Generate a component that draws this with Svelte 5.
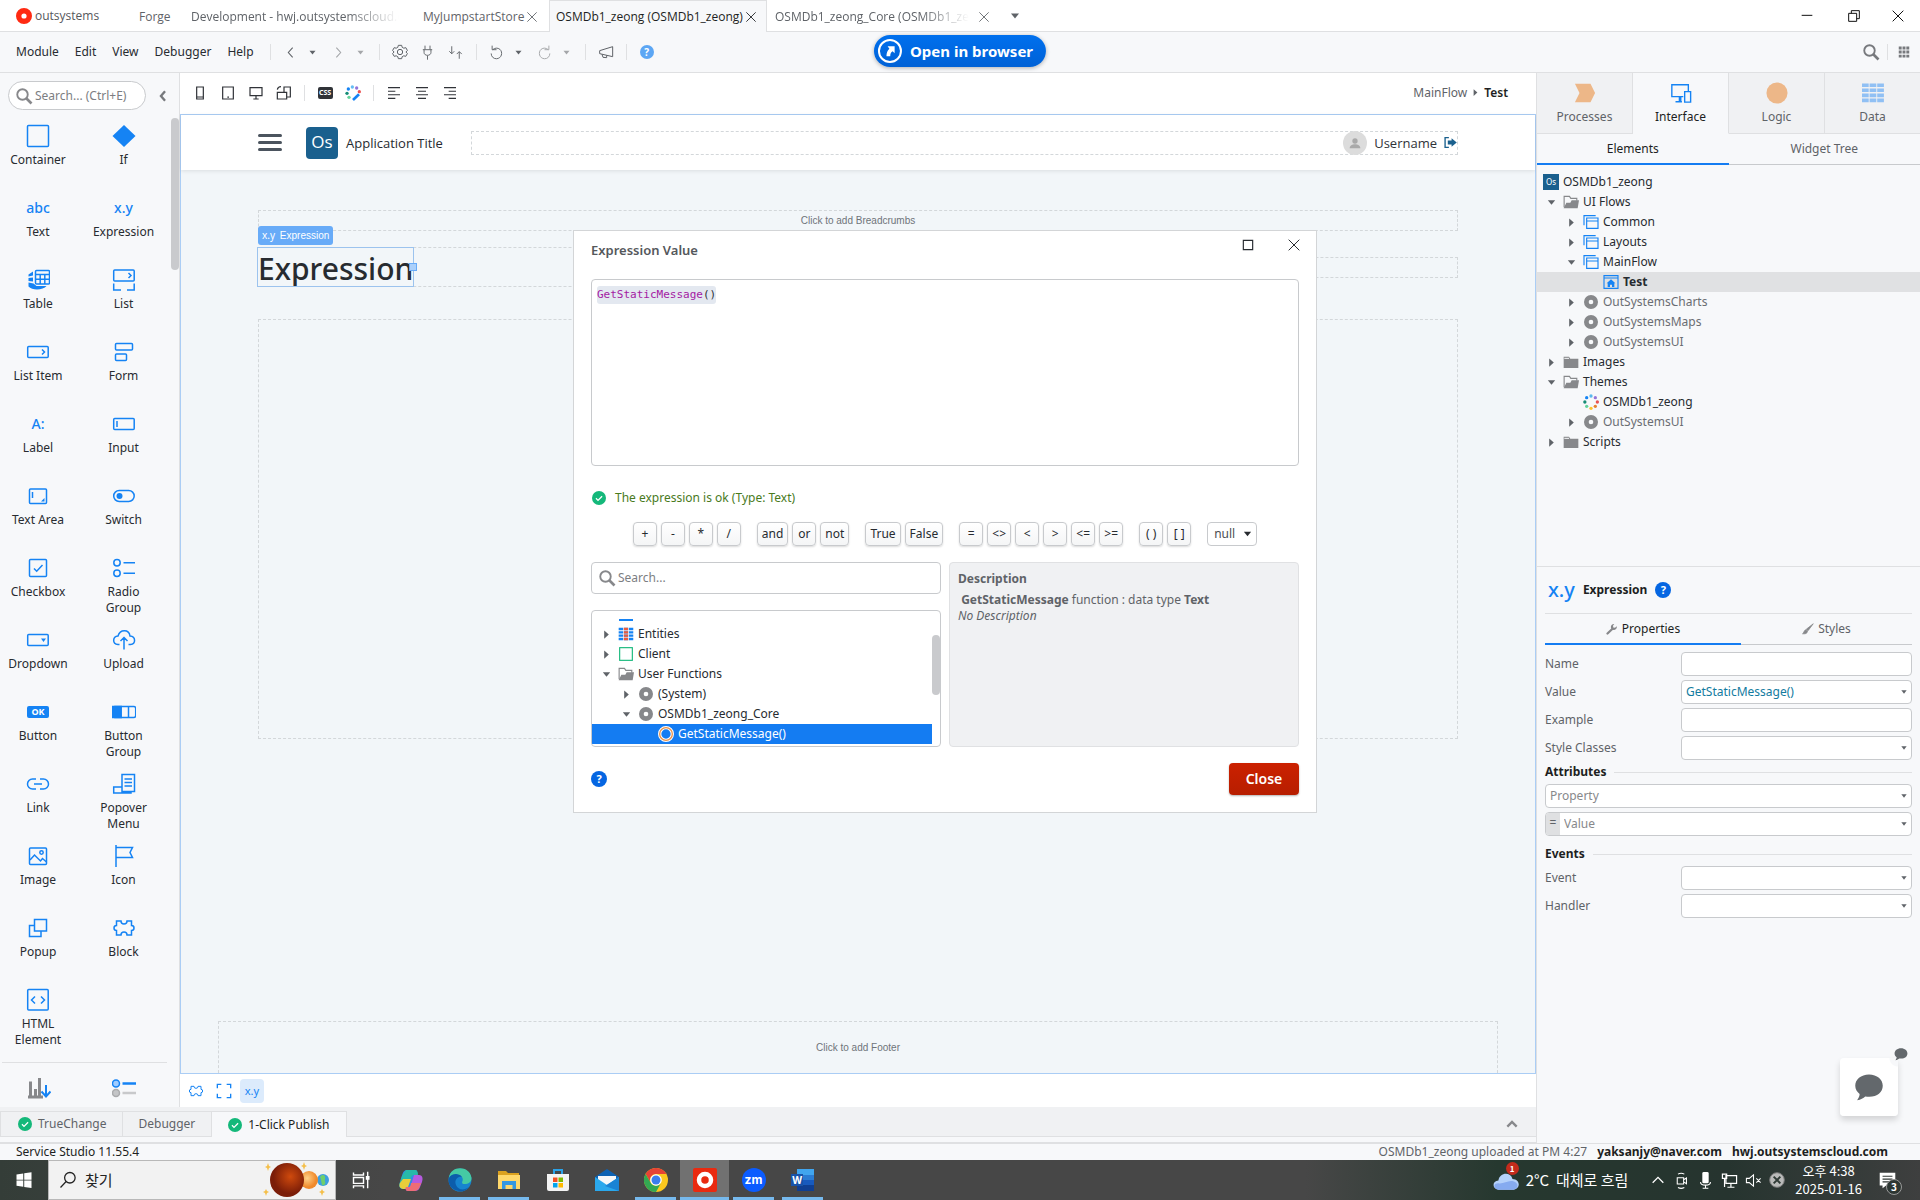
<script>
    // Inner markup of every icon, drawn on a 24x24 grid
    const icons = {
        container: '<rect x="1.5" y="1.5" width="21" height="21" rx="1"/>',
        if: '<path d="M12 1 23.5 12 12 23 .5 12z" fill="currentColor" stroke="none"/>',
        table: '<rect x="9.500" y="2.500" width="14" height="13.500" rx="1"/><path d="M9.500 6.500h14M9.500 11.200h14M14.200 6.500v9.500M18.800 6.500v9.500"/><path d="M2.500 6.500 7 3.500v4l-4.500 1zM2.500 10 7 9.500v4l-4.500-.5zM2.500 14.500l5 1 3 2.500h10c-3 4-14 5-18 .5z" fill="currentColor" stroke="none"/>',
        list: '<rect x="1.700" y="2" width="20.500" height="11" rx="1"/><path d="m16.500 5 2.500 2.500-2.500 2.500M1.700 15.500V22H9M22.200 15.500V22H15"/>',
        listitem: '<rect x="1.700" y="6.500" width="20.500" height="11" rx="1"/><path d="m16 9.500 2.500 2.500-2.500 2.500"/>',
        form: '<rect x="3.500" y="3.500" width="17" height="6.500" rx="1"/><rect x="3.500" y="14" width="11" height="6.500" rx="1"/>',
        input: '<rect x="1.700" y="6.500" width="20.500" height="11" rx="1"/><path d="M5 9v6"/>',
        textarea: '<rect x="3.500" y="5" width="17" height="14.500" rx="1"/><path d="M6.500 8v6"/><path d="M18.500 14v3.500H15z" fill="currentColor" stroke="none"/>',
        switch: '<rect x="1.700" y="6.500" width="20.500" height="11" rx="5.500"/><circle cx="7.500" cy="12" r="3" fill="currentColor" stroke="none"/>',
        checkbox: '<rect x="3.500" y="3.500" width="17" height="17" rx="1"/><path d="m8 12.500 2.700 2.700L16.500 9"/>',
        radio: '<circle cx="5" cy="6.700" r="3.200"/><circle cx="5" cy="17.300" r="3.200"/><path d="M11.500 6.700h11.500M11.500 17.300h11.500"/>',
        dropdown: '<rect x="1.700" y="6.500" width="20.500" height="11" rx="1"/><path d="M15 10.500h5l-2.500 3.500z" fill="currentColor" stroke="none"/>',
        upload: '<path d="M7.500 16.500H6c-6-.5-5.500-8 0-8.500C8 1 17 1 18 8c6 .5 6 8 .500 8.500H16.500M12 21.500v-12M8.500 13 12 9.500l3.500 3.500"/>',
        button: '<rect x="1" y="6" width="22" height="12" rx="2" fill="currentColor" stroke="none"/>',
        buttongroup: '<rect x=".7" y="6.500" width="23" height="11" rx="2"/><path d="M.7 6.500h8.500v11H.7z" fill="currentColor"/><path d="M16.500 6.500v11"/>',
        link: '<path d="M10 7H6.500a5 5 0 0 0 0 10H10M14 7h3.500a5 5 0 0 1 0 10H14M8 12h8"/>',
        popover: '<path d="M10 2.500h12.500v17H10zM12.500 7h7.500M12.500 10.500h7.500M12.500 14h7.500M10 15H1.700v6H19v-1.500"/>',
        image: '<rect x="3.500" y="4" width="17" height="16.500" rx="1"/><path d="m4 16 4.500-5 6 6 2-2.500 4 3.500"/><circle cx="15.500" cy="8.500" r="1.700"/>',
        flag: '<path d="M4 1v22M4 3.500h16.500L18 8.500l2.500 5H4"/>',
        popup: '<path d="M8.500 3.500h12v11.500h-12zM8.500 9.500h-5v11H15v-5"/>',
        block: '<path d="M4.500 5H9a2.500 2.500 0 1 0 6 0h4.500v4.500a2.500 2.500 0 1 1 0 5V19H15a2.500 2.500 0 1 0-6 0H4.500v-4.500a2.500 2.500 0 1 1 0-5z"/>',
        html: '<rect x="1.700" y="1.500" width="20.500" height="20.500" rx="1"/><path d="m9 8.500-3.500 3.500L9 15.500M15 8.500l3.500 3.500-3.500 3.500"/>',
        chart: '<path d="M1 21h15M3.500 5.500v15M8.500 13v7.500M12.500 2v18.500" stroke="#87888b" stroke-width="3"/><path d="M19 9v11M14.500 15.500 19 20.500l4.500-5" stroke-width="2"/>',
        legend: '<circle cx="4" cy="7.500" r="3.500" fill="#9fccff"/><path d="M10.500 7.500H24" stroke-width="2.500"/><circle cx="4" cy="17" r="3.500" fill="#c4c5c7" stroke="#aaabad"/><path d="M10.500 17H24" stroke="#c8c9cb" stroke-width="2.500"/>',
        search: '<circle cx="10" cy="10" r="7" stroke-width="2.500"/><path d="m15 15 7 7" stroke-width="3.500"/>',
        left: '<path d="m16 3-8 9 8 9" stroke-width="2"/>',
        right: '<path d="m8 3 8 9-8 9" stroke-width="2"/>',
        chevron: '<path d="m15.500 4-7 8 7 8" stroke-width="4"/>',
        up: '<path d="m5 16 7-7 7 7" stroke-width="3.500"/>',
        caret: '<path d="M4 7h16l-8 10z" fill="currentColor" stroke="none"/>',
        play: '<path d="M7 3v18l10-9z" fill="currentColor" stroke="none"/>',
        gear: '<circle cx="12" cy="12" r="4"/><path d="M9.500 2h5l.8 3 2.400 1.300 3-.8 2.400 4.200-2.200 2.300 2.200 2.300-2.400 4.200-3-.8-2.400 1.300-.8 3h-5l-.8-3-2.400-1.300-3 .8L.9 14.300 3.100 12 .9 9.700l2.400-4.200 3 .8L8.700 5z"/>',
        plug: '<path d="M8 1v6M16 1v6M4.500 7.500h15M6.500 7.500V12c0 6 11 6 11 0V7.500M12 17v6.500"/>',
        swap: '<path d="M6 2v12M2 10l4 4 4-4M18 22V11M14 14.500l4-4 4 4"/>',
        undo: '<path d="M5 1v6.500h7M6 7.500c3-3 8-3.500 11.500-.5 5 4.500 3 14.500-5.500 15-5 0-8.500-3.500-8.500-8.500"/>',
        redo: '<path d="M19 1v6.500h-7M18 7.500c-3-3-8-3.500-11.500-.5-5 4.500-3 14.500 5.500 15 5 0 8.500-3.500 8.500-8.500"/>',
        mega: '<path d="M22 4v15L2.500 14.500V10zM6 15.500 7.500 20l5.500.5V17"/>',
        phone: '<path d="M7 3h10v18H7zM7 18h10" stroke-width="1.800"/>',
        tablet: '<path d="M4 3h16v18H4zM11 18.200h2.500" stroke-width="1.800"/>',
        monitor: '<path d="M3 4h18v12H3zM12 16v5M8 21h8" stroke-width="1.800"/>',
        rotate: '<path d="M2 11h14v10H2zM16 18h5.500V3H12v8M2 7c.5-3 2-4.500 5.500-4.500" stroke-width="1.800"/>',
        alignleft: '<path d="M3 4h18M3 9.300h11M3 14.700h18M3 20h11" stroke-width="1.700"/>',
        aligncenter: '<path d="M3 4h18M6 9.300h12M3 14.700h18M6 20h12" stroke-width="1.700"/>',
        alignright: '<path d="M3 4h18M10 9.300h11M3 14.700h18M10 20h11" stroke-width="1.700"/>',
        wheel: '<g stroke="none"><circle cx="12" cy="3" r="2.500" fill="#58b9ee"/><circle cx="18.500" cy="5.500" r="2.500" fill="#9475d8"/><circle cx="21.500" cy="12" r="2.500" fill="#ea5252"/><circle cx="18.500" cy="18.500" r="2.500" fill="#e78131"/><circle cx="12" cy="21.500" r="2.500" fill="#fec52e"/><circle cx="5.500" cy="18.500" r="2.500" fill="#65d29b"/><circle cx="2.800" cy="12" r="2.500" fill="#168c76"/><circle cx="5.500" cy="5.500" r="2.500" fill="#1583f4"/></g>',
        brush: '<g stroke="none"><circle cx="11" cy="3" r="2.500" fill="#65bdf3"/><circle cx="17.500" cy="4.500" r="2.500" fill="#9475d8"/><circle cx="21.500" cy="10" r="2.500" fill="#ea5252"/><circle cx="5" cy="6" r="2.500" fill="#1583f4"/><circle cx="3" cy="12.500" r="2.500" fill="#168c76"/><circle cx="6" cy="18.500" r="2.500" fill="#65d29b"/></g><path d="m21 14-9 8.500" stroke="#1583f4" stroke-width="4"/>',
        full: '<path d="M2 8V2h6M16 2h6v6M22 16v6h-6M8 22H2v-6" stroke-width="2"/>',
        check: '<circle cx="12" cy="12" r="12" fill="#14b87a" stroke="none"/><path d="m6.800 12.500 3.500 3.500 7-7" stroke="#fff" stroke-width="2.200"/>',
        folder: '<path d="M1 4h8l2 3h12v14H1z" fill="#87888b" stroke="none"/><path d="M2 6.500h7" stroke="#f7f8fa" stroke-width="1.500"/>',
        open: '<path d="M1.700 20V3.500h8l2 3h9V10" stroke="#87888b" stroke-width="1.700"/><path d="M1 21.500 5 13h6l2-3.500h11L22 21.500z" fill="#87888b" stroke="none"/>',
        flow: '<path d="M1.500 17V2.500H19M5.500 6h17v15.500h-17zM5.500 10.500h17" stroke="#1583f4" stroke-width="1.700"/>',
        screen: '<path d="M1.500 2.500h21v19h-21zM1.500 6h21" stroke="#1583f4" stroke-width="1.700"/><path d="m12 8 6.500 6H17v5.500h-3.500V16h-3v3.500H7V14H5.500z" fill="#1583f4" stroke="none"/>',
        module: '<circle cx="12" cy="12" r="7" stroke="#87888b" stroke-width="7"/>',
        entity: '<path d="M1 4.500h22M1 9.500h22M1 14.500h22M1 19.500h22" stroke="#1583f4" stroke-width="3.500" stroke-dasharray="6.500 1.200"/><path d="M8.700 4.500h6.500M8.700 9.500h6.500M8.700 14.500h6.500M8.700 19.500h6.500" stroke="#ea5b3d" stroke-width="3.500"/>',
        client: '<rect x="2.500" y="2.500" width="19" height="19" stroke="#14b87a" stroke-width="1.700"/>',
        action: '<circle cx="12" cy="12" r="9.500" stroke="#fff" stroke-width="5"/><circle cx="12" cy="12" r="9.500" stroke="#e8924a" stroke-width="2"/>',
        wrench: '<path d="m3 21 9.500-9" stroke-width="4.500" stroke-linecap="round"/><path d="M21.500 6.500a6 6 0 1 1-5-4.500l-2.500 3.500.500 3.500 3.500.5z" fill="currentColor" stroke="none"/>',
        paint: '<path d="M22.500 1.500 12 15.500l-3.500-3zM7.500 13.500l3.500 3c-.5 5-5 5.500-10 5 3-1.500 2.500-6.500 6.500-8z" fill="currentColor" stroke="currentColor"/>',
        minimize: '<path d="M4 11h16"/>',
        restore: '<path d="M4 8h12v12H4zM8 8V4h12v12h-4"/>',
        maximize: '<path d="M4 4h16v16H4z" stroke-width="2"/>',
        close: '<path d="m4 4 16 16M20 4 4 20"/>',
        apps: '<path d="M3 5h18M3 12h18M3 19h18" stroke-width="5" stroke-dasharray="5 1.500"/>',
        bubble: '<path d="M12 2C5.500 2 1 6 1 11c0 3 1.500 5 3.500 6.500 0 2-1 3.500-2 5 3-.5 5-1.500 6.500-3 8 1.500 14-2.500 14-8.500C23 6 18.500 2 12 2z" fill="currentColor" stroke="none"/>',
        person: '<circle cx="12" cy="9" r="4" fill="currentColor" stroke="none"/><path d="M4 20c0-8 16-8 16 0z" fill="currentColor" stroke="none"/>',
        logout: '<path d="M9 3H2v18h7" stroke-width="2.500"/><path d="M7 8.500h7V4l9.500 8-9.500 8v-4.500H7z" fill="currentColor" stroke="none"/>',
        processes: '<path d="M1 2h17l5 10-5 10H1l5-10z" fill="#edb788" stroke="none"/>',
        interface: '<path d="M14.500 16H2V3h18v7M16 10.500h6.500v11.500H16zM6 21.500h7"/><path d="M9.500 16h3v5h-3z" fill="currentColor" stroke="none"/>',
        logic: '<circle cx="12" cy="12" r="11.500" fill="#edb788" stroke="none"/>',
        data: '<path d="M0 3.500h24M0 9h24M0 14.500h24M0 20h24" stroke="#90c0f4" stroke-width="4" stroke-dasharray="7.300 1"/>',
        windows: '<path d="m2 4.500 9-1.300v8.300H2zM12.300 3 22 1.500v10h-9.700zM2 12.700h9V21l-9-1.300zM12.300 12.700H22v10L12.300 21.200z" fill="#fff" stroke="none"/>',
        find: '<circle cx="14.500" cy="9" r="7" stroke-width="1.700"/><path d="m9.500 14-7.500 8" stroke-width="1.700"/>',
        taskview: '<path d="M3 3v3h12V3M3 9h12v7H3zM3 22v-3h12v3M20 2v20" stroke-width="1.700"/><path d="M18.500 8h3v3h-3z" fill="#fff"/>',
        copilot: '<g stroke="none"><path d="M8 2h8c2 0 3 2 2 5l-3 9c-1 4-3 5-6 5H4c-4 0-4-4-3-7l2.500-8C4.500 3 6 2 8 2z" fill="#2f8ce8"/><path d="M7 2h9c2 0 3 2 3 5h-4c-2 0-3 2-4 5l-2 6c-1 2-2 3-5 3-4 0-4-4-3-7l2-6z" fill="#27b9a9"/><path d="M4 11h8l-3 8c-1 2-3 2-5 2-4-1-4-4-3-6z" fill="#e9ce3a"/><path d="M15 7h5c4 0 4 4 3 7l-2 5c-1 3-3 4-6 4H9c-2 0-3-2-2-4h3c2 0 2-2 3-5z" fill="#b65be0"/><path d="M12 15h10l-2 5c-1 2-3 3-5 3H9c-2 0-3-2-2-4h3c1 0 2-2 2-4z" fill="#ef6d76"/></g>',
        edge: '<g stroke="none"><circle cx="12" cy="12" r="11.500" fill="#1784cf"/><path d="M1 10C2-3 22-3 23.500 10c0 4-3 6-7 6-2 0-3-1-2-3 1-3-1-6-5-6-4-1-7 1-8.500 3z" fill="#45c9a4"/><path d="M1 10C3 6 10 4 14 9c-5-1-8 4-6 8 2 5 8 6 13 2-2 3-6 5-10 4C3 22-.5 15 1 10z" fill="#0c5dab"/></g>',
        explorer: '<g stroke="none"><path d="M1 3h8l2 2h11v5H1z" fill="#dba11f"/><path d="M1 7h22v14H1z" fill="#ffd86b"/><path d="M5 13h14v8h-3.500v-4h-7v4H5z" fill="#3498e2"/></g>',
        store: '<path d="M8 6V2h8v4" stroke="#2aa2e8" stroke-width="2"/><path d="M1 6h22v15a2 2 0 0 1-2 2H3a2 2 0 0 1-2-2z" fill="#f3f3f3" stroke="none"/><g stroke="none"><path d="M7 9.500h4.500V14H7z" fill="#f25022"/><path d="M12.500 9.500H17V14h-4.500z" fill="#7fba00"/><path d="M7 15h4.500v4.500H7z" fill="#00a4ef"/><path d="M12.500 15H17v4.500h-4.500z" fill="#ffb900"/></g>',
        mail: '<g stroke="none"><path d="M0 9 12 1l12 8v3H0z" fill="#0c62b4"/><path d="M3 8h18v9H3z" fill="#f5f7f9"/><path d="m0 9 12 8 12-8v14H0z" fill="#2aa8ed"/><path d="m24 9-14 9 14 5z" fill="#1a83d4"/></g>',
        chrome: '<g stroke="none"><circle cx="12" cy="12" r="12" fill="#fbc81e"/><path d="M1.600 6A12 12 0 0 1 22.400 6H12a6 6 0 0 0-5.200 9z" fill="#e64335"/><path d="M1.600 6A12 12 0 0 0 12 24l5-9a6 6 0 0 1-10.200 0z" fill="#33a852"/><circle cx="12" cy="12" r="5.800" fill="#fff"/><circle cx="12" cy="12" r="4.500" fill="#3b7ded"/></g>',
        outsystems: '<rect width="24" height="24" rx="2" fill="#e92a10" stroke="none"/><circle cx="12" cy="12" r="6" stroke="#fff" stroke-width="4.500"/>',
        zoom: '<circle cx="12" cy="12" r="12" fill="#0b5cff" stroke="none"/>',
        word: '<g stroke="none"><path d="M6 1h17v6H6z" fill="#41a5ee"/><path d="M6 7h17v5H6z" fill="#2b7cd3"/><path d="M6 12h17v5H6z" fill="#185abd"/><path d="M6 17h17v6H6z" fill="#103f91"/><path d="M0 6h12v12H0z" fill="#1853a8"/></g>',
        weather: '<path d="M5 21c-6-1-6-8 0-8.500C6 5 16 4 18 11c7 0 8 9 1 10z" fill="#b4d1fa" stroke="none"/><path d="M5 21c-5-1-5-6 0-6 4 1 9-3 13-2 6 1 6 7 1 8z" fill="#86abf0" stroke="none"/>',
        camera: '<path d="M6 8h9v9H6zM15 11l4-2.500v8L15 14M7 3c3-1.500 6-1.500 9 0M7 22c3 1.500 6 1.500 9 0"/>',
        mic: '<rect x="7.500" y="0" width="9" height="16" rx="2" fill="#fff" stroke="none"/><path d="M5 14c0 6 14 6 14 0M12 19v4M8 23h8"/>',
        network: '<path d="M7 5h15v11H7zM14 16v5M9 21.500h10M2 3h6v6H2zM5 9v12" stroke-width="1.700"/>',
        mute: '<path d="M2 9h4l6-5v16l-6-5H2zM16 9l6 6M22 9l-6 6" stroke-width="1.500"/>',
        blocked: '<circle cx="12" cy="12" r="11" fill="#b9bab9" stroke="#777"/><path d="m7 7 10 10M17 7 7 17" stroke="#303b36" stroke-width="3"/>',
        notes: '<path d="M1 1h22v18H10l-5 4v-4H1z" fill="#fff" stroke="none"/><path d="M5 6h14M5 10h14M5 14h10" stroke="#303735" stroke-width="1.700"/>',
        shortcut: '<path d="M8 4h12v12l-3.500-3.500C13 15 12.500 17 12.500 21H6c0-6 1.500-9.500 5-13z" fill="#fff" stroke="none"/>'
    };

    const palette = [
        ["Container", "container"], ["If", "if"],
        ["Text", "", "abc"], ["Expression", "", "x.y"],
        ["Table", "table"], ["List", "list"],
        ["List Item", "listitem"], ["Form", "form"],
        ["Label", "", "A:"], ["Input", "input"],
        ["Text Area", "textarea"], ["Switch", "switch"],
        ["Checkbox", "checkbox"], ["Radio Group", "radio"],
        ["Dropdown", "dropdown"], ["Upload", "upload"],
        ["Button", "button", "OK"], ["Button Group", "buttongroup"],
        ["Link", "link"], ["Popover Menu", "popover"],
        ["Image", "image"], ["Icon", "flag"],
        ["Popup", "popup"], ["Block", "block"],
        ["HTML Element", "html"]
    ];

    const elements = [
        { level: 0, icon: "os", label: "OSMDb1_zeong" },
        { level: 1, arrow: "caret", icon: "open", label: "UI Flows" },
        { level: 2, arrow: "play", icon: "flow", label: "Common" },
        { level: 2, arrow: "play", icon: "flow", label: "Layouts" },
        { level: 2, arrow: "caret", icon: "flow", label: "MainFlow" },
        { level: 3, icon: "screen", label: "Test", current: true },
        { level: 2, arrow: "play", icon: "module", label: "OutSystemsCharts", muted: true },
        { level: 2, arrow: "play", icon: "module", label: "OutSystemsMaps", muted: true },
        { level: 2, arrow: "play", icon: "module", label: "OutSystemsUI", muted: true },
        { level: 1, arrow: "play", icon: "folder", label: "Images" },
        { level: 1, arrow: "caret", icon: "open", label: "Themes" },
        { level: 2, icon: "wheel", label: "OSMDb1_zeong" },
        { level: 2, arrow: "play", icon: "module", label: "OutSystemsUI", muted: true },
        { level: 1, arrow: "play", icon: "folder", label: "Scripts" }
    ];

    const scope = [
        { level: 1, arrow: "play", icon: "entity", label: "Entities" },
        { level: 1, arrow: "play", icon: "client", label: "Client" },
        { level: 1, arrow: "caret", icon: "open", label: "User Functions" },
        { level: 2, arrow: "play", icon: "module", label: "(System)" },
        { level: 2, arrow: "caret", icon: "module", label: "OSMDb1_zeong_Core" },
        { level: 3, icon: "action", label: "GetStaticMessage()", selected: true }
    ];

    const operators = [
        ["+", "-", "*", "/"],
        ["and", "or", "not"],
        ["True", "False"],
        ["=", "<>", "<", ">", "<=", ">="],
        ["( )", "[ ]"]
    ];

    const layers = [
        ["Processes", "processes"],
        ["Interface", "interface"],
        ["Logic", "logic"],
        ["Data", "data"]
    ];

    const apps = [
        { name: "copilot" },
        { name: "edge", running: true },
        { name: "explorer", running: true },
        { name: "store" },
        { name: "mail" },
        { name: "chrome", running: true },
        { name: "outsystems", running: true, active: true },
        { name: "zoom", running: true, text: "zm" },
        { name: "word", running: true, text: "W" }
    ];

    let expression = $state("GetStaticMessage()");
    let layer = $state("Interface");
</script>

{#snippet icon(name, size = 16)}
    <svg class="icon" viewBox="0 0 24 24" width={size} height={size} aria-hidden="true">{@html icons[name]}</svg>
{/snippet}

{#snippet tool(name, size = 16, label = name)}
    <button class="tool" aria-label={label}>{@render icon(name, size)}</button>
{/snippet}

{#snippet tree(rows)}
    <ul class="tree">
        {#each rows as row}
            <li
                class:current={row.current}
                class:selected={row.selected}
                class:muted={row.muted}
                style="padding-left: {row.level ? row.level * 20 - 17 : 6}px"
            >
                {#if row.level}
                    <span class="arrow">{#if row.arrow}{@render icon(row.arrow, 11)}{/if}</span>
                {/if}
                {#if row.icon === "os"}
                    <span class="os-mini">Os</span>
                {:else}
                    {@render icon(row.icon, 16)}
                {/if}
                <span class="name">{row.label}</span>
            </li>
        {/each}
    </ul>
{/snippet}

<div class="studio">
    <header class="titlebar">
        <div class="brand">
            <svg viewBox="0 0 16 16" width="16" height="16" aria-hidden="true">
                <circle cx="8" cy="8" r="5.300" fill="none" stroke="#ff2a12" stroke-width="5.400" />
            </svg>
            <span>outsystems</span>
        </div>
        <nav class="windows">
            <a class="window forge" href="#forge">Forge</a>
            <a class="window dev" href="#development"><span class="fade">Development - hwj.outsystemscloud.com</span></a>
            <div class="window store">
                <a href="#store">MyJumpstartStore</a>
                <button aria-label="Close MyJumpstartStore">{@render icon("close", 14)}</button>
            </div>
            <div class="window active">
                <a href="#module">OSMDb1_zeong (OSMDb1_zeong)</a>
                <button aria-label="Close OSMDb1_zeong">{@render icon("close", 14)}</button>
            </div>
            <div class="window core">
                <a class="fade" href="#core">OSMDb1_zeong_Core (OSMDb1_zeong_Core)</a>
                <button aria-label="Close OSMDb1_zeong_Core">{@render icon("close", 14)}</button>
            </div>
            <button class="more" aria-label="All tabs">{@render icon("caret", 12)}</button>
        </nav>
        <div class="controls">
            <button aria-label="Minimize">{@render icon("minimize")}</button>
            <button aria-label="Restore">{@render icon("restore")}</button>
            <button aria-label="Close">{@render icon("close")}</button>
        </div>
    </header>

    <div class="menubar">
        <nav class="menus">
            {#each ["Module", "Edit", "View", "Debugger", "Help"] as menu}
                <button>{menu}</button>
            {/each}
        </nav>
        <div class="group">
            <div class="pair">{@render tool("left", 13, "Back")}<button class="drop" aria-label="Back history">{@render icon("caret", 9)}</button></div>
            <div class="pair dim">{@render tool("right", 13, "Forward")}<button class="drop" aria-label="Forward history">{@render icon("caret", 9)}</button></div>
        </div>
        <div class="group">
            {@render tool("gear", 16)}
            {@render tool("plug", 15)}
            {@render tool("swap", 15)}
        </div>
        <div class="group">
            <div class="pair">{@render tool("undo", 15)}<button class="drop" aria-label="Undo history">{@render icon("caret", 9)}</button></div>
            <div class="pair dim">{@render tool("redo", 15)}<button class="drop" aria-label="Redo history">{@render icon("caret", 9)}</button></div>
        </div>
        <div class="group">{@render tool("mega", 16)}</div>
        <div class="group"><button class="tool" aria-label="Help"><span class="help light">?</span></button></div>
        <div class="menubar-right">
            {@render tool("search", 18)}
            <span class="rule"></span>
            {@render tool("apps", 14)}
        </div>
        <button class="open-browser">
            <span class="ring">{@render icon("shortcut", 14)}</span>
            Open in browser
        </button>
    </div>

    <div class="body">
        <div class="workspace">
            <div class="editor">
                <aside class="toolbox">
                    <div class="toolbox-top">
                        <label class="search pill">
                            {@render icon("search", 18)}
                            <input type="text" placeholder="Search... (Ctrl+E)" aria-label="Search widgets" />
                        </label>
                        <button class="collapse" aria-label="Collapse">{@render icon("chevron", 14)}</button>
                    </div>
                    <div class="palette">
                        {#each palette as [label, name, glyph]}
                            <button class="widget">
                                <span class="picture">
                                    {#if name}{@render icon(name, 24)}{/if}
                                    {#if glyph}<span class="glyph" class:ok={name}>{glyph}</span>{/if}
                                </span>
                                <span class="caption">{label}</span>
                            </button>
                        {/each}
                    </div>
                    <div class="palette second">
                        <button class="widget" aria-label="Chart"><span class="picture">{@render icon("chart", 24)}</span></button>
                        <button class="widget" aria-label="Legend"><span class="picture">{@render icon("legend", 24)}</span></button>
                    </div>
                    <span class="thumb"></span>
                </aside>

                <main class="stage">
                    <div class="stagebar">
                        <div class="group">
                            {@render tool("phone")}
                            {@render tool("tablet")}
                            {@render tool("monitor")}
                            {@render tool("rotate")}
                        </div>
                        <div class="group">
                            <button class="tool" aria-label="Edit style sheet"><span class="css">CSS</span></button>
                            {@render tool("brush")}
                        </div>
                        <div class="group">
                            {@render tool("alignleft")}
                            {@render tool("aligncenter")}
                            {@render tool("alignright")}
                        </div>
                        <div class="crumbs">
                            <a href="#mainflow">MainFlow</a>
                            {@render icon("play", 9)}
                            <span>Test</span>
                        </div>
                    </div>

                    <div class="canvas">
                        <div class="app-header">
                            <span class="hamburger"><i></i><i></i><i></i></span>
                            <span class="os-logo">Os</span>
                            <span class="app-title">Application Title</span>
                            <div class="slot app-slot">
                                <span class="avatar">{@render icon("person", 16)}</span>
                                <span>Username</span>
                                {@render icon("logout", 13)}
                            </div>
                        </div>
                        <div class="page">
                            <div class="slot breadcrumbs">Click to add Breadcrumbs</div>
                            <div class="heading">
                                <div class="heading-box">
                                    <span class="badge"><span>x.y</span> Expression</span>
                                    <h1>Expression<span class="handle"></span></h1>
                                </div>
                                <div class="slot actions"></div>
                            </div>
                            <div class="slot content"></div>
                        </div>
                        <div class="slot footer">Click to add Footer</div>
                    </div>

                    <div class="pathbar">
                        {@render tool("block", 16, "Block")}
                        {@render tool("full", 16, "Container")}
                        <button class="path-current">x.y</button>
                    </div>
                </main>
            </div>

            <div class="bottom-tabs">
                <button>{@render icon("check", 14)} TrueChange</button>
                <button>Debugger</button>
                <button class="active">{@render icon("check", 14)} 1-Click Publish</button>
                <span class="fill"></span>
                <button class="expand" aria-label="Expand">{@render icon("up", 16)}</button>
            </div>
        </div>

        <aside class="side">
            <div class="layers">
                {#each layers as [label, name]}
                    <button class:active={layer === label} onclick={() => (layer = label)}>
                        {@render icon(name, 22)}
                        {label}
                    </button>
                {/each}
            </div>
            <div class="subtabs">
                <button class="active">Elements</button>
                <button>Widget Tree</button>
            </div>
            <div class="elements">{@render tree(elements)}</div>

            <section class="properties">
                <div class="prop-head">
                    <span class="xy">x.y</span>
                    <strong>Expression</strong>
                    <span class="help">?</span>
                </div>
                <div class="prop-tabs">
                    <button class="active">{@render icon("wrench", 12)} Properties</button>
                    <button>{@render icon("paint", 12)} Styles</button>
                </div>
                <div class="fields">
                    <label for="f-name">Name</label>
                    <input id="f-name" type="text" />
                    <label for="f-value">Value</label>
                    <div class="combo"><select id="f-value" class="code"><option>GetStaticMessage()</option></select>{@render icon("caret", 8)}</div>
                    <label for="f-example">Example</label>
                    <input id="f-example" type="text" />
                    <label for="f-classes">Style Classes</label>
                    <div class="combo"><select id="f-classes"><option></option></select>{@render icon("caret", 8)}</div>
                </div>
                <h2>Attributes</h2>
                <div class="attributes">
                    <div class="combo"><select aria-label="Property"><option>Property</option></select>{@render icon("caret", 8)}</div>
                    <div class="combo"><span class="eq">=</span><select aria-label="Value"><option>Value</option></select>{@render icon("caret", 8)}</div>
                </div>
                <h2 class="events">Events</h2>
                <div class="fields tight">
                    <label for="f-event">Event</label>
                    <div class="combo"><select id="f-event"><option></option></select>{@render icon("caret", 8)}</div>
                    <label for="f-handler">Handler</label>
                    <div class="combo"><select id="f-handler"><option></option></select>{@render icon("caret", 8)}</div>
                </div>
            </section>
            <button class="chat" aria-label="Feedback">{@render icon("bubble", 30)}<span class="mini">{@render icon("bubble", 14)}</span></button>
        </aside>
    </div>

    <footer class="status">
        <span>Service Studio 11.55.4</span>
        <span class="uploaded">OSMDb1_zeong uploaded at PM 4:27</span>
        <strong>yaksanjy@naver.com</strong>
        <strong>hwj.outsystemscloud.com</strong>
    </footer>

    <div class="taskbar">
        <button class="start" aria-label="Start">{@render icon("windows", 18)}</button>
        <label class="task-search">
            {@render icon("find", 18)}
            <input type="text" placeholder="찾기" aria-label="찾기" />
            <svg viewBox="0 0 68 38" width="68" height="38" aria-hidden="true">
                <defs>
                    <radialGradient id="mars" cx=".6" cy=".4"><stop offset="0" stop-color="#cf4a0d" /><stop offset="1" stop-color="#7b1d08" /></radialGradient>
                    <radialGradient id="venus" cx=".4" cy=".4"><stop offset="0" stop-color="#ffd18a" /><stop offset="1" stop-color="#f08a2c" /></radialGradient>
                </defs>
                <circle cx="60" cy="19" r="6" fill="#3c9fe0" />
                <path d="M57 16c3-4 6-1 5 2s2 4-1 6-2-4-4-8z" fill="#6fcf6b" />
                <circle cx="46" cy="19" r="9" fill="url(#venus)" />
                <circle cx="24" cy="19" r="17" fill="url(#mars)" />
                <path d="m5 2 1 3 2 1-2 1-1 3-1-3-2-1 2-1zM41 1l1 3 2 1-2 1-1 3-1-3-2-1 2-1zM3 28l1 2 2 1-2 1-1 3-1-3-2-1 2-1zM59 28l1 2 2 1-2 1-1 3-1-3-2-1 2-1z" fill="#f5bf48" />
            </svg>
        </label>
        <button class="app view" aria-label="Task view">{@render icon("taskview", 20)}</button>
        {#each apps as app}
            <button class="app" class:running={app.running} class:active={app.active} aria-label={app.name}>
                {@render icon(app.name, 24)}
                {#if app.text}<span class="app-text {app.name}">{app.text}</span>{/if}
            </button>
        {/each}
        <div class="tray">
            <span class="weather">{@render icon("weather", 26)}<b>1</b></span>
            <span class="temp">2°C&nbsp; 대체로 흐림</span>
            <span class="tray-icons">
                <svg class="icon" viewBox="0 0 24 24" width="16" height="16"><path d="m4 16 8-8 8 8" stroke-width="2" /></svg>
                {@render icon("camera", 17)}
                {@render icon("mic", 17)}
                {@render icon("network", 17)}
                {@render icon("mute", 17)}
                {@render icon("blocked", 16)}
            </span>
            <span class="clock"><span>오후 4:38</span><span>2025-01-16</span></span>
            <span class="notes">{@render icon("notes", 17)}<b>3</b></span>
        </div>
    </div>

    <div class="dialog" role="dialog" aria-labelledby="dialog-title">
        <div class="dialog-head">
            <h2 id="dialog-title">Expression Value</h2>
            <button aria-label="Maximize">{@render icon("maximize", 14)}</button>
            <button aria-label="Close dialog">{@render icon("close", 16)}</button>
        </div>
        <div class="code-box">
            <pre aria-hidden="true"><mark>{expression.replace("()", "")}<i>()</i></mark></pre>
            <textarea bind:value={expression} aria-label="Expression" spellcheck="false"></textarea>
        </div>
        <p class="valid">{@render icon("check", 14)} The expression is ok (Type: Text)</p>
        <div class="operators">
            {#each operators as group}
                <div class="op-group">
                    {#each group as op}<button>{op}</button>{/each}
                </div>
            {/each}
            <div class="combo null"><select aria-label="Null value"><option>null</option></select>{@render icon("caret", 11)}</div>
        </div>
        <div class="lower">
            <div class="finder">
                <label class="search">
                    {@render icon("search", 18)}
                    <input type="text" placeholder="Search..." aria-label="Search scope" />
                </label>
                <div class="scope">
                    <span class="cut"></span>
                    {@render tree(scope)}
                    <span class="thumb"></span>
                </div>
            </div>
            <div class="description">
                <h3>Description</h3>
                <p>&nbsp;<b>GetStaticMessage</b> function : data type <b>Text</b></p>
                <p><em>No Description</em></p>
            </div>
        </div>
        <div class="dialog-foot">
            <span class="help">?</span>
            <button>Close</button>
        </div>
    </div>
</div>

<style>
    :global(body) {
        overflow: hidden;
    }

    .studio {
        position: relative;
        display: flex;
        flex-direction: column;
        height: 100vh;
        background: #f7f8fa;
        color: #272b30;
        font: 12px/16px "Noto Sans", "Noto Sans CJK KR", sans-serif;
    }
    .studio * {
        box-sizing: border-box;
    }

    button,
    input,
    select,
    textarea {
        margin: 0;
        padding: 0;
        border: 0;
        background: none;
        color: inherit;
        font: inherit;
        outline: none;
    }
    button {
        display: flex;
        align-items: center;
        justify-content: center;
    }
    a {
        color: inherit;
        text-decoration: none;
    }
    h1, h2, h3, p, ul {
        margin: 0;
        padding: 0;
    }
    .icon {
        flex: none;
        fill: none;
        stroke: currentColor;
        stroke-width: 1.5;
    }

    /* Title bar */
    .titlebar {
        display: flex;
        height: 32px;
        background: #fff;
        color: #5f6368;
        font-family: "Open Sans", "Noto Sans", sans-serif;
    }
    .brand {
        display: flex;
        align-items: center;
        gap: 3px;
        width: 123px;
        padding-left: 16px;
        border-bottom: 1px solid #dfe0e2;
        color: #56585c;
        font-size: 12px;
        font-weight: 500;
    }
    .windows {
        display: flex;
        flex: 1;
    }
    .windows::after {
        content: "";
        flex: 1;
        border-bottom: 1px solid #dfe0e2;
    }
    .window {
        display: flex;
        align-items: center;
        justify-content: space-between;
        padding-top: 2px;
        border-bottom: 1px solid #dfe0e2;
        white-space: nowrap;
    }
    .forge {
        width: 52px;
        padding-left: 16px;
    }
    .dev {
        width: 232px;
        padding-right: 8px;
        padding-left: 16px;
    }
    .store {
        width: 142px;
        padding-right: 10px;
        padding-left: 16px;
    }
    .window.active {
        width: 218px;
        padding: 1px 8px 0 6px;
        border: 1px solid #dfe0e2;
        border-bottom: 0;
        background: #f7f8fa;
        color: #1d1f22;
    }
    .core {
        width: 224px;
        padding-left: 8px;
    }
    .core a {
        width: 194px;
    }
    .fade {
        overflow: hidden;
        mask-image: linear-gradient(to right, #000 75%, transparent);
    }
    .more {
        width: 48px;
        border-bottom: 1px solid #dfe0e2;
    }
    .controls {
        display: flex;
        padding-right: 1px;
        border-bottom: 1px solid #dfe0e2;
        color: #111;
    }
    .controls button {
        width: 47px;
        margin-left: 0;
    }
    .controls button:last-child {
        width: 42px;
    }

    /* Menu bar */
    .menubar {
        position: relative;
        display: flex;
        align-items: center;
        height: 41px;
        border-bottom: 1px solid #dfe0e2;
    }
    .menus {
        display: flex;
        gap: 16px;
        padding: 0 16px;
    }
    .group {
        display: flex;
        align-items: center;
        height: 16px;
        padding: 0 6px;
        color: #5f6368;
    }
    .menus + .group,
    .group + .group {
        border-left: 1px solid #dfe0e2;
    }
    .pair {
        display: flex;
        padding-right: 4px;
    }
    .dim {
        color: #a4a6a9;
    }
    .tool {
        width: 28px;
        height: 20px;
    }
    .drop {
        width: 16px;
    }
    .menubar-right {
        display: flex;
        align-items: center;
        margin-left: auto;
        padding-right: 2px;
        color: #77797d;
    }
    .rule {
        width: 1px;
        height: 16px;
        margin: 0 2px;
        background: #dfe0e2;
    }
    .help {
        display: flex;
        align-items: center;
        justify-content: center;
        width: 16px;
        height: 16px;
        border-radius: 50%;
        background: #0566e2;
        color: #fff;
        font-size: 11px;
        font-weight: 700;
    }
    .help.light {
        width: 14px;
        height: 14px;
        background: #5ca6f4;
        font-size: 10px;
    }
    .open-browser {
        position: absolute;
        top: 3px;
        left: 50%;
        gap: 8px;
        height: 32px;
        padding: 0 13px 0 4px;
        border-radius: 16px;
        background: linear-gradient(#0070ee, #0061d6);
        box-shadow: 0 1px 4px rgba(0, 0, 0, 0.3);
        color: #fff;
        font-size: 15px;
        font-weight: 700;
        white-space: nowrap;
        transform: translateX(-50%);
    }
    .ring {
        display: flex;
        align-items: center;
        justify-content: center;
        width: 24px;
        height: 24px;
        border: 2px solid #fff;
        border-radius: 50%;
    }

    /* Body */
    .body {
        display: flex;
        flex: 1;
        min-height: 0;
    }
    .workspace {
        display: flex;
        flex: 1;
        flex-direction: column;
        min-width: 0;
    }
    .editor {
        display: flex;
        flex: 1;
        min-height: 0;
    }

    /* Toolbox */
    .toolbox {
        position: relative;
        width: 179px;
        overflow: hidden;
    }
    .toolbox-top {
        display: flex;
        align-items: center;
        gap: 10px;
        padding: 8px 8px 14px;
    }
    .search {
        display: flex;
        align-items: center;
        gap: 2px;
        height: 32px;
        padding: 0 6px;
        border: 1px solid #c8cacd;
        border-radius: 4px;
        background: #fff;
        color: #87888b;
    }
    .search input {
        flex: 1;
        min-width: 0;
    }
    .search input::placeholder {
        color: #7c7e82;
        opacity: 1;
    }
    .search.pill {
        width: 138px;
        height: 29px;
        border-radius: 15px;
    }
    .collapse {
        color: #77797d;
    }
    .palette {
        display: grid;
        grid-template-columns: 76px 95px;
    }
    .widget {
        flex-direction: column;
        justify-content: flex-start;
        height: 72px;
    }
    .picture {
        position: relative;
        display: flex;
        align-items: center;
        justify-content: center;
        height: 24px;
        margin-bottom: 4px;
        color: #1583f4;
    }
    .glyph {
        font-size: 14px;
        font-weight: 500;
    }
    .glyph.ok {
        position: absolute;
        color: #fff;
        font-size: 9px;
        font-weight: 700;
    }
    .caption {
        max-width: 66px;
        text-align: center;
    }
    .palette.second {
        width: 165px;
        margin: 2px 0 0 2px;
        padding-top: 13px;
        border-top: 1px solid #dfe0e2;
        grid-template-columns: 74px 95px;
    }
    .thumb {
        position: absolute;
        right: 0;
        width: 8px;
        border-radius: 4px;
        background: #c9cacd;
    }
    .toolbox .thumb {
        top: 45px;
        height: 152px;
    }

    /* Stage */
    .stage {
        display: flex;
        flex: 1;
        flex-direction: column;
        min-width: 0;
        border-left: 1px solid #dfe0e2;
        background: #fff;
    }
    .stagebar {
        display: flex;
        align-items: center;
        height: 41px;
        padding-bottom: 2px;
    }
    .stagebar .group {
        color: #303338;
    }
    .css {
        width: 15px;
        border-radius: 2px;
        background: #303338;
        color: #fff;
        font-size: 7px;
        font-weight: 700;
        line-height: 12px;
    }
    .crumbs {
        display: flex;
        align-items: center;
        gap: 4px;
        margin-left: auto;
        padding-right: 28px;
        color: #5f6368;
    }
    .crumbs span {
        color: #1d1f22;
        font-weight: 600;
    }
    .canvas {
        display: flex;
        flex: 1;
        flex-direction: column;
        border: 1px solid #aacdf5;
        background: #f2f6f9;
    }
    .slot {
        border: 1px dashed #d3d7da;
    }
    .app-header {
        display: flex;
        align-items: center;
        height: 55px;
        padding: 0 77px;
        background: #fff;
        box-shadow: 0 1px 4px rgba(0, 0, 0, 0.1);
        font-family: "Open Sans", "Noto Sans", sans-serif;
        font-size: 13px;
    }
    .hamburger {
        display: grid;
        gap: 4px;
        width: 24px;
        margin-right: 24px;
    }
    .hamburger i {
        height: 3px;
        border-radius: 2px;
        background: #4b545e;
    }
    .os-logo {
        width: 32px;
        height: 32px;
        margin-right: 8px;
        border-radius: 4px;
        background: #1a608e;
        color: #fff;
        font: 17px/30px "Open Sans", sans-serif;
        text-align: center;
    }
    .app-title {
        margin-right: 28px;
    }
    .app-slot {
        display: flex;
        flex: 1;
        align-items: center;
        justify-content: flex-end;
        gap: 7px;
        height: 24px;
        color: #303338;
    }
    .app-slot :global(.icon) {
        color: #1a608e;
    }
    .avatar {
        display: flex;
        align-items: center;
        justify-content: center;
        width: 24px;
        height: 24px;
        border-radius: 50%;
        background: #dcdcdc;
    }
    .avatar :global(.icon) {
        color: #a9a9a9;
    }
    .page {
        padding: 40px 77px 0;
    }
    .breadcrumbs,
    .footer {
        display: flex;
        align-items: center;
        justify-content: center;
        height: 21px;
        color: #6f7479;
        font: 10px/12px "Liberation Sans", sans-serif;
    }
    .heading {
        display: flex;
        align-items: center;
        height: 56px;
        margin-bottom: 32px;
        padding-top: 16px;
    }
    .heading-box {
        position: relative;
        flex: 1;
        border: dashed #d3d7da;
        border-width: 1px 0;
    }
    .actions {
        flex: 1;
        height: 21px;
    }
    h1 {
        position: relative;
        width: max-content;
        height: 38px;
        outline: 1px solid #9cc3ee;
        font-size: 30px;
        font-weight: 500;
        line-height: 42px;
    }
    .handle {
        position: absolute;
        top: 15px;
        right: -4px;
        width: 8px;
        height: 8px;
        border: 1px solid #68abf8;
        background: #abd0fb;
    }
    .badge {
        position: absolute;
        bottom: 41px;
        left: 0;
        z-index: 1;
        padding: 0 4px;
        border-radius: 3px;
        background: #68abf8;
        color: #fff;
        font: 10px/18px "Liberation Sans", sans-serif;
        white-space: nowrap;
    }
    .badge span {
        margin-right: 2px;
        font-family: "Noto Sans", sans-serif;
    }
    .content {
        height: 420px;
    }
    .footer {
        height: 52px;
        margin: auto 37px 0;
        border-bottom: 0;
    }
    .pathbar {
        display: flex;
        align-items: center;
        height: 33px;
        padding-left: 2px;
        color: #1583f4;
    }
    .path-current {
        width: 24px;
        height: 24px;
        margin-left: 2px;
        border-radius: 4px;
        background: #dcebfc;
        font-size: 11px;
    }

    /* Bottom tabs */
    .bottom-tabs {
        display: flex;
        height: 37px;
        padding-top: 4px;
        background: linear-gradient(#f0f1f3 29px, #f7f8fa 0);
        border-bottom: 2px solid #dfe0e2;
        color: #5f6368;
    }
    .bottom-tabs button {
        gap: 6px;
        height: 26px;
        padding: 0 16px;
        border: 1px solid #dfe0e2;
        border-right: 0;
    }
    .bottom-tabs button:first-child {
        padding: 0 15px 0 17px;
    }
    .bottom-tabs .active {
        border-right: 1px solid #dfe0e2;
        border-bottom: 0;
        background: #f7f8fa;
        color: #1d1f22;
    }
    .fill {
        flex: 1;
        height: 26px;
        border-bottom: 1px solid #dfe0e2;
    }
    .bottom-tabs .expand {
        border-width: 0 0 1px;
        color: #87888b;
    }

    /* Side panel */
    .side {
        position: relative;
        display: flex;
        flex-direction: column;
        width: 384px;
        border-left: 1px solid #dfe0e2;
        border-bottom: 1px solid #dfe0e2;
    }
    .layers {
        display: flex;
    }
    .layers button {
        flex: 1;
        flex-direction: column;
        gap: 5px;
        height: 61px;
        border-right: 1px solid #dfe0e2;
        border-bottom: 1px solid #dfe0e2;
        background: #f0f1f3;
        color: #5f6368;
    }
    .layers button:last-child {
        border-right: 0;
    }
    .layers .active {
        border-bottom-color: transparent;
        background: #f7f8fa;
        color: #1d1f22;
    }
    .layers .active :global(.icon) {
        color: #1583f4;
    }
    .subtabs,
    .prop-tabs {
        display: flex;
        height: 31px;
    }
    .subtabs button,
    .prop-tabs button {
        flex: 1;
        border-bottom: 1px solid #c8cacd;
        color: #5f6368;
    }
    .subtabs .active,
    .prop-tabs .active {
        border-bottom: 2px solid #147cf2;
        color: #1d1f22;
    }
    .elements {
        flex: 1;
        padding-top: 7px;
    }
    .tree {
        list-style: none;
    }
    .tree li {
        display: flex;
        align-items: center;
        height: 20px;
    }
    .arrow {
        display: flex;
        justify-content: center;
        width: 23px;
        color: #5f6368;
    }
    .name {
        margin-left: 4px;
    }
    .os-mini {
        width: 16px;
        height: 16px;
        background: #1a608e;
        color: #fff;
        font-size: 8px;
        text-align: center;
    }
    .muted {
        color: #6a6d72;
    }
    .current {
        background: #e0e1e3;
        font-weight: 700;
    }
    .selected {
        margin-right: 8px;
        background: #147cf2;
        color: #fff;
    }

    .properties {
        height: 577px;
        padding: 0 8px;
        border-top: 1px solid #dfe0e2;
        color: #5f6368;
    }
    .prop-head {
        display: flex;
        align-items: center;
        gap: 8px;
        height: 47px;
        padding-left: 3px;
        border-bottom: 1px solid #dfe0e2;
        color: #1d1f22;
    }
    strong {
        font-weight: 700;
    }
    .xy {
        color: #1583f4;
        font-size: 20px;
        font-weight: 500;
    }
    .prop-tabs button {
        gap: 4px;
    }
    .prop-tabs .active {
        flex: 0 0 196px;
    }
    .prop-tabs :global(.icon) {
        color: #87888b;
    }
    .fields {
        display: grid;
        grid-template-columns: 136px 1fr;
        gap: 4px 0;
        align-items: center;
        padding-top: 7px;
    }
    .fields.tight {
        padding-top: 0;
    }
    .fields input,
    .combo {
        height: 24px;
        border: 1px solid #c8cacd;
        border-radius: 4px;
        background: #fff;
    }
    .combo {
        position: relative;
        display: flex;
        overflow: hidden;
    }
    .combo select {
        flex: 1;
        min-width: 0;
        padding: 0 16px 0 4px;
        appearance: none;
        color: #87888b;
    }
    .combo .code {
        color: #127ba0;
    }
    .combo > :global(.icon) {
        position: absolute;
        top: 50%;
        right: 3px;
        transform: translateY(-50%);
        pointer-events: none;
    }
    .eq {
        width: 14px;
        background: #dfe0e2;
        line-height: 20px;
        text-align: center;
    }
    .properties h2 {
        display: flex;
        align-items: center;
        gap: 8px;
        height: 24px;
        color: #1d1f22;
        font-size: 12px;
        font-weight: 700;
    }
    .properties h2::after {
        content: "";
        flex: 1;
        height: 1px;
        background: #dfe0e2;
    }
    .properties .events {
        margin-top: 6px;
    }
    .attributes {
        display: grid;
        gap: 4px;
    }
    .chat {
        position: absolute;
        right: 22px;
        bottom: 27px;
        width: 58px;
        height: 58px;
        border-radius: 4px;
        background: radial-gradient(circle at 100% 0, #f7f8fa 8px, #fff 9px);
        box-shadow: 0 4px 6px rgba(0, 0, 0, 0.15);
        color: #63686c;
    }
    .mini {
        position: absolute;
        top: -11px;
        right: -10px;
    }

    /* Status bar */
    .status {
        display: flex;
        gap: 10px;
        height: 16px;
        padding: 0 32px 0 16px;
        color: #1d1f22;
    }
    .uploaded {
        margin-left: auto;
        color: #5f6368;
    }

    /* Taskbar */
    .taskbar {
        display: flex;
        height: 40px;
        background: linear-gradient(to right, #343d38, #474747 20%, #474747 68%, #26382f 78%, #26342f 90%, #3e3f3f);
        color: #fff;
        font-family: "Noto Sans CJK KR", sans-serif;
    }
    .start {
        width: 48px;
    }
    .task-search {
        display: flex;
        align-items: center;
        gap: 8px;
        width: 288px;
        padding: 0 4px 0 10px;
        border: 1px solid #b8b8b8;
        background: #f2f2f2;
        color: #222;
    }
    .task-search input {
        flex: 1;
        min-width: 0;
        font-size: 15px;
    }
    .task-search input::placeholder {
        color: #222;
        opacity: 1;
    }
    .app {
        position: relative;
        width: 49px;
        border-bottom: 3px solid transparent;
        padding-top: 3px;
    }
    .view {
        width: 50px;
    }
    .running::after {
        content: "";
        position: absolute;
        bottom: -3px;
        left: 4px;
        right: 4px;
        height: 3px;
        background: #76b9ed;
    }
    .app.active {
        background: #717171;
    }
    .app.active::after {
        left: 0;
        right: 0;
    }
    .app-text {
        position: absolute;
        font: 700 12px/16px Inter, sans-serif;
    }
    .app-text.word {
        left: 14px;
        font-size: 10px;
    }
    .tray {
        display: flex;
        align-items: center;
        margin-left: auto;
        padding-right: 24px;
    }
    .weather {
        position: relative;
        display: flex;
        margin-right: 7px;
    }
    .weather b {
        position: absolute;
        top: -5px;
        right: 0;
        width: 13px;
        border-radius: 50%;
        background: #c42b1c;
        font-size: 8px;
        line-height: 13px;
        text-align: center;
    }
    .temp {
        font-size: 15px;
    }
    .tray-icons {
        display: flex;
        gap: 7px;
        margin: 0 10px 0 22px;
    }
    .clock {
        display: flex;
        flex-direction: column;
        align-items: center;
        font-size: 13px;
        line-height: 18px;
    }
    .notes {
        position: relative;
        display: flex;
        margin-left: 17px;
    }
    .notes b {
        position: absolute;
        top: 7px;
        left: 7px;
        width: 16px;
        border: 1px solid #999;
        border-radius: 50%;
        background: #2d3633;
        font-size: 10px;
        line-height: 14px;
        text-align: center;
    }

    /* Expression dialog */
    .dialog {
        position: absolute;
        top: 230px;
        left: 573px;
        width: 744px;
        padding: 0 17px 17px;
        border: 1px solid #d3d5d7;
        background: #fff;
    }
    .dialog-head {
        display: flex;
        height: 48px;
    }
    .dialog-head h2 {
        flex: 1;
        color: #55585c;
        font-size: 13px;
        font-weight: 600;
        line-height: 38px;
    }
    .dialog-head button {
        height: 28px;
        margin-left: 31px;
    }
    .dialog-head button:last-child {
        margin-right: -3px;
    }
    .code-box {
        position: relative;
        height: 187px;
        border: 1px solid #c8cacd;
        border-radius: 4px;
    }
    .code-box pre {
        margin: 0;
        padding: 6px 5px;
        font: 11px/18px "DejaVu Sans Mono", monospace;
    }
    mark {
        display: inline-block;
        border-radius: 3px;
        background: #e3e8f0;
        color: #a31aa3;
    }
    mark i {
        color: #303338;
        font-style: normal;
    }
    .code-box textarea {
        position: absolute;
        inset: 0;
        padding: 6px 5px;
        color: transparent;
        font: 11px/18px "DejaVu Sans Mono", monospace;
        resize: none;
    }
    .valid {
        display: flex;
        align-items: center;
        gap: 9px;
        margin: 24px 0 16px 1px;
        color: #497a1d;
    }
    .operators {
        display: flex;
        justify-content: center;
        gap: 16px;
    }
    .op-group {
        display: flex;
        gap: 4px;
    }
    .op-group button {
        min-width: 24px;
        height: 24px;
        padding: 0 4px;
        border: 1px solid #c8cacd;
        border-radius: 4px;
        background: linear-gradient(#fff, #f4f5f6);
        box-shadow: 0 1px 2px rgba(0, 0, 0, 0.15);
    }
    .combo.null {
        width: 50px;
    }
    .null select {
        padding: 0 0 0 6px;
        color: #4b4e52;
    }
    .lower {
        display: grid;
        grid-template-columns: 1fr 1fr;
        gap: 8px;
        margin-top: 16px;
    }
    .finder {
        display: grid;
        gap: 16px;
    }
    .scope {
        position: relative;
        height: 137px;
        overflow: hidden;
        border: 1px solid #c8cacd;
        border-radius: 4px;
    }
    .cut {
        display: block;
        width: 14px;
        height: 2px;
        margin: 8px 0 3px 27px;
        background: #1583f4;
    }
    .scope .thumb {
        top: 24px;
        height: 60px;
    }
    .description {
        padding: 8px;
        border: 1px solid #e0e1e3;
        border-radius: 4px;
        background: #f0f1f3;
        color: #5f6368;
    }
    .description h3 {
        margin-bottom: 5px;
        font-size: 12px;
        font-weight: 700;
    }
    .description b {
        font-weight: 700;
    }
    .dialog-foot {
        display: flex;
        align-items: center;
        justify-content: space-between;
        margin-top: 16px;
    }
    .dialog-foot button {
        width: 70px;
        height: 32px;
        border-radius: 4px;
        background: linear-gradient(#cb2100, #b71e00);
        box-shadow: 0 1px 2px rgba(0, 0, 0, 0.3);
        color: #fff;
        font-size: 14px;
        font-weight: 600;
    }
</style>
